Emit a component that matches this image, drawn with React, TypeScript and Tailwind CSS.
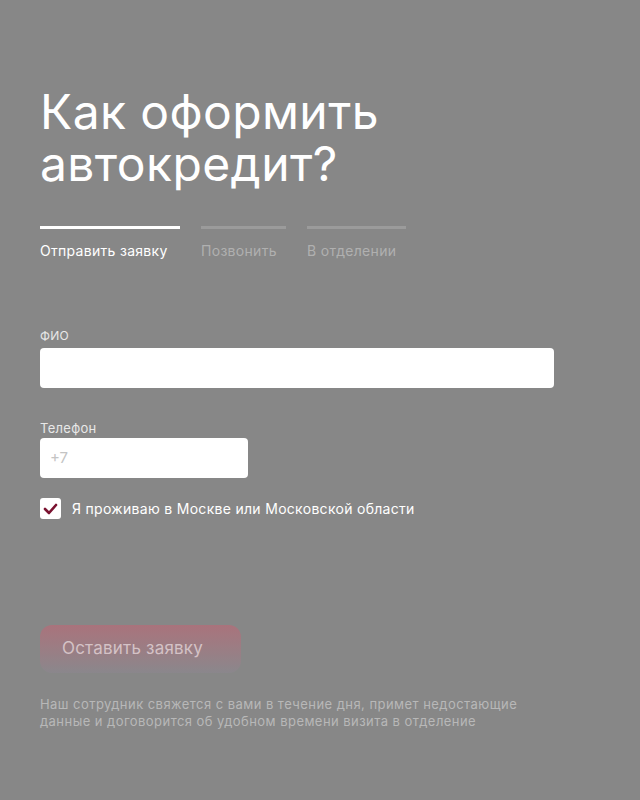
import React from "react";

export default function App() {
  return (
    <div className="min-h-[800px] w-full bg-[#878787] pl-10 pr-[86px] pt-[86px]" style={{ fontFamily: "Inter, 'Noto Sans', sans-serif" }}>
      <h1 className="text-[48px] leading-[52px] font-normal tracking-[0.4px] text-white">
        Как оформить
        <br />
        автокредит?
      </h1>
      <div className="mt-[36px] flex gap-[21px]">
        <div className="flex flex-col">
          <div className="h-[3px] w-[140px] bg-white" />
          <span className="mt-[13px] text-[14px] leading-[18px] tracking-[0.3px] text-white">Отправить заявку</span>
        </div>
        <div className="flex flex-col">
          <div className="h-[3px] w-[85px] bg-[#9b9b9b]" />
          <span className="mt-[13px] text-[14px] leading-[18px] tracking-[0.3px] text-[#b0b0b0]">Позвонить</span>
        </div>
        <div className="flex flex-col">
          <div className="h-[3px] w-[99px] bg-[#9b9b9b]" />
          <span className="mt-[13px] text-[14px] leading-[18px] tracking-[0.3px] text-[#b0b0b0]">В отделении</span>
        </div>
      </div>

      <div className="mt-[69px] flex flex-col">
        <label className="text-[12px] leading-[14px] tracking-[0.3px] text-[#e8e8e8]">ФИО</label>
        <div className="mt-[5px] h-10 w-full rounded bg-white" />
      </div>

      <div className="mt-[32px] flex flex-col">
        <label className="text-[13px] leading-[16px] tracking-[0.3px] text-[#e8e8e8]">Телефон</label>
        <div className="mt-[2px] flex h-10 w-[208px] items-center rounded bg-white px-[10px]">
          <span className="text-[15px] text-[#c4c4c4]">+7</span>
        </div>
      </div>

      <div className="mt-[20px] flex items-center gap-[11px]">
        <div className="flex h-[21px] w-[21px] items-center justify-center rounded-[3px] bg-white">
          <svg width="15" height="12" viewBox="0 0 15 12" fill="none">
            <path d="M2 6 L6 10 L13 2" stroke="#7a1230" strokeWidth="2.6" strokeLinecap="round" strokeLinejoin="round" />
          </svg>
        </div>
        <span className="text-[14px] tracking-[0.3px] text-white">Я проживаю в Москве или Московской области</span>
      </div>

      <button className="mt-[106px] flex h-12 w-[201px] items-center justify-start rounded-xl bg-gradient-to-b from-[#a9737c] to-[#8a878c] pl-[22px] text-[17px] tracking-[0.2px] text-[#d4c2c6]">
        Оставить заявку
      </button>

      <p className="mt-[23px] w-[500px] text-[13px] leading-[17px] tracking-[0.45px] text-[#b8b8b8]">
        Наш сотрудник свяжется с вами в течение дня, примет недостающие данные и договорится об удобном времени визита в отделение
      </p>
    </div>
  );
}
